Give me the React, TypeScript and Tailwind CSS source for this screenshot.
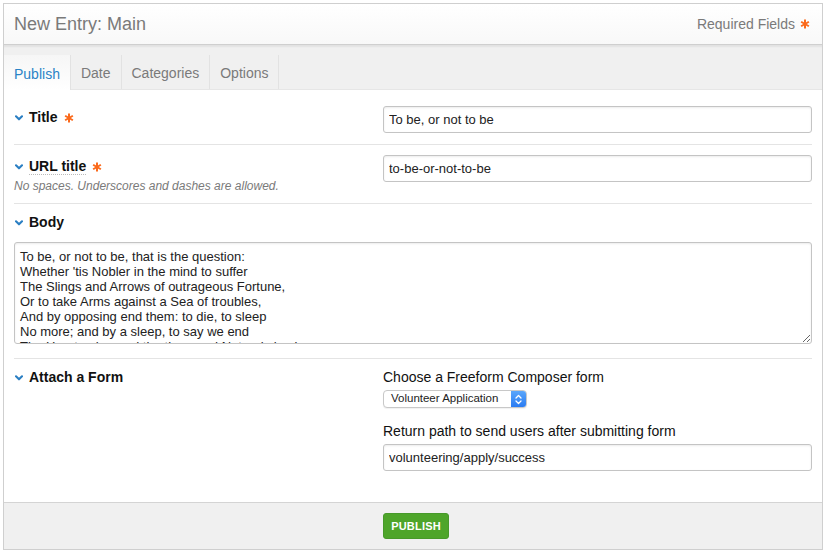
import React from "react";

const Chevron = () => (
  <svg width="8" height="6" viewBox="0 0 8 6" className="shrink-0">
    <path d="M1 1.3 L4 4.3 L7 1.3" fill="none" stroke="#2b7fc3" strokeWidth="2.1" strokeLinecap="round" strokeLinejoin="round" />
  </svg>
);

const Star = () => (
  <svg width="10" height="10" viewBox="0 0 10 10" className="inline-block">
    <g stroke="#fb6a1c" strokeWidth="2" strokeLinecap="butt">
      <line x1="5" y1="0.5" x2="5" y2="9.5" />
      <line x1="1.1" y1="2.75" x2="8.9" y2="7.25" />
      <line x1="1.1" y1="7.25" x2="8.9" y2="2.75" />
    </g>
  </svg>
);

const Label = ({ children, req }: { children: React.ReactNode; req?: boolean }) => (
  <div className="flex items-center gap-[6px] pl-px">
    <Chevron />
    <span className="text-[14px] leading-[17px] font-bold text-[#111]">{children}</span>
    {req && <Star />}
  </div>
);

const inputCls =
  "w-full h-[27px] border border-[#c4c4c4] rounded-[3px] px-[5px] text-[13px] text-[#222] bg-white shadow-[inset_0_1px_2px_rgba(0,0,0,0.08)] outline-none";

export default function App() {
  return (
    <div className="p-[3px] bg-white" style={{ fontFamily: '"Liberation Sans", Arial, sans-serif' }}>
      <div className="border border-[#cfcfcf] h-[547px] flex flex-col">
        {/* header */}
        <div className="h-[41px] shrink-0 flex items-center justify-between px-[10px] bg-gradient-to-b from-white to-[#f8f8f8] border-b border-[#cfcfcf]">
          <h1 className="text-[18px] text-[#7a7a7a] leading-none">New Entry: Main</h1>
          <div className="flex items-center gap-[5px] text-[14px] text-[#7a7a7a] pr-[2px]">
            <span>Required Fields</span>
            <Star />
          </div>
        </div>
        {/* tabs */}
        <div className="h-[45px] shrink-0 bg-[#f0f0f0] flex items-end shadow-[inset_0_3px_2px_-1px_rgba(0,0,0,0.06)] border-b border-[#e6e6e6]">
          <div className="h-[35px] pt-[3px] px-[10px] flex items-center text-[14px] text-[#2a83c6] bg-gradient-to-b from-[#f6f6f6] to-white border-r border-[#e2e2e2] -mb-px">
            Publish
          </div>
          <div className="h-[34px] pt-[2px] px-[10px] flex items-center text-[14px] text-[#7a7a7a] border-r border-[#e2e2e2]">Date</div>
          <div className="h-[34px] pt-[2px] px-[10px] flex items-center text-[14px] text-[#7a7a7a] border-r border-[#e2e2e2]">Categories</div>
          <div className="h-[34px] pt-[2px] px-[10px] flex items-center text-[14px] text-[#7a7a7a] border-r border-[#e2e2e2]">Options</div>
        </div>
        {/* content */}
        <div className="flex-1 bg-white px-[10px] flex flex-col">
          {/* Title */}
          <div className="grid grid-cols-[369px_1fr] pt-[16px] pb-[11px] border-b border-[#e4e4e4]">
            <div className="pt-[3px]">
              <Label req>Title</Label>
            </div>
            <input className={inputCls} defaultValue="To be, or not to be" />
          </div>
          {/* URL title */}
          <div className="grid grid-cols-[369px_1fr] pt-[10px] pb-[9px] border-b border-[#e4e4e4]">
            <div className="pt-[3px]">
              <Label req>
                <span className="border-b border-dotted border-[#bbb]">URL title</span>
              </Label>
              <div className="mt-[4px] text-[12px] leading-[15px] italic text-[#7a7a7a]">
                No spaces. Underscores and dashes are allowed.
              </div>
            </div>
            <input className={inputCls} defaultValue="to-be-or-not-to-be" />
          </div>
          {/* Body */}
          <div className="pt-[10px] pb-[14px] border-b border-[#e4e4e4]">
            <Label>Body</Label>
            <textarea
              className="mt-[11px] block w-full h-[102px] border border-[#c4c4c4] rounded-[3px] px-[5px] pt-[6px] text-[13px] leading-[15px] text-[#222] overflow-hidden outline-none shadow-[inset_0_1px_2px_rgba(0,0,0,0.08)]"
              defaultValue={
                "To be, or not to be, that is the question:\nWhether 'tis Nobler in the mind to suffer\nThe Slings and Arrows of outrageous Fortune,\nOr to take Arms against a Sea of troubles,\nAnd by opposing end them: to die, to sleep\nNo more; and by a sleep, to say we end\nThe Heart-ache, and the thousand Natural shocks\nThat Flesh is heir to"
              }
            />
          </div>
          {/* Attach a form */}
          <div className="grid grid-cols-[369px_1fr] pt-[10px]">
            <div>
              <Label>Attach a Form</Label>
            </div>
            <div className="flex flex-col">
              <div className="text-[14px] leading-[17px] text-[#111]">Choose a Freeform Composer form</div>
              <div className="mt-[4px] w-[144px] h-[18px] flex items-stretch border border-[#c8c8c8] rounded-[4px] bg-white overflow-hidden shadow-[0_1px_1px_rgba(0,0,0,0.06)]">
                <div className="flex-1 flex items-center pl-[7px] text-[11.5px] text-[#222]">Volunteer Application</div>
                <div className="w-[15px] flex items-center justify-center bg-gradient-to-b from-[#5aa6fb] to-[#2a7bf2]">
                  <svg width="7" height="11" viewBox="0 0 7 11">
                    <path d="M1 4 L3.5 1.5 L6 4 M1 7 L3.5 9.5 L6 7" fill="none" stroke="white" strokeWidth="1.3" strokeLinecap="round" strokeLinejoin="round" />
                  </svg>
                </div>
              </div>
              <div className="mt-[15px] text-[14px] leading-[17px] text-[#111]">Return path to send users after submitting form</div>
              <input className={inputCls + " mt-[4px]"} defaultValue="volunteering/apply/success" />
            </div>
          </div>
        </div>
        {/* footer */}
        <div className="h-[47px] shrink-0 bg-[#f0f0f0] border-t border-[#d4d4d4] grid grid-cols-[369px_1fr] px-[10px] pt-[10px]">
          <div />
          <div>
            <button className="w-[66px] h-[26px] rounded-[3px] bg-[#4ea52a] text-white text-[11px] font-bold tracking-[0.2px] border border-[#47992a]">
              PUBLISH
            </button>
          </div>
        </div>
      </div>
    </div>
  );
}
